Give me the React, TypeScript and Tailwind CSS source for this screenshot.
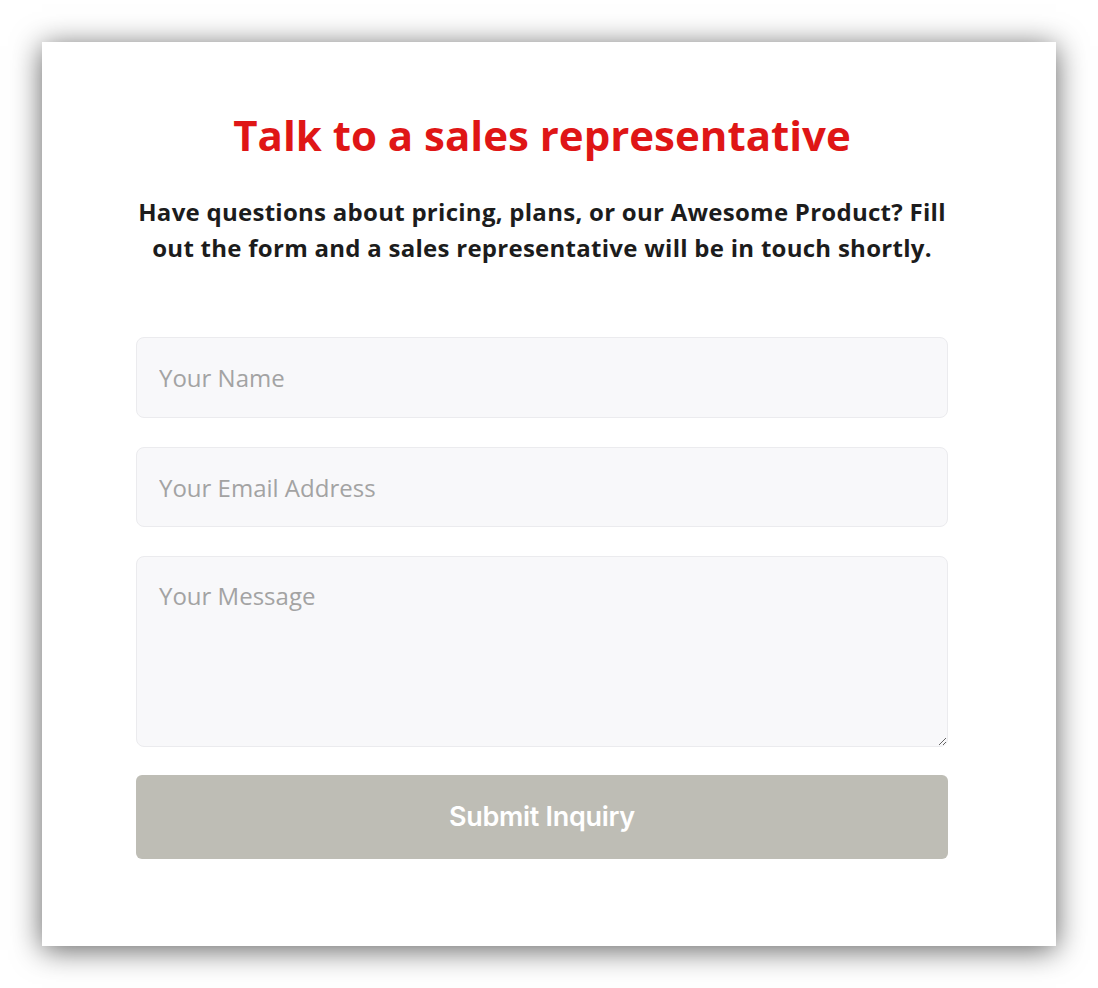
import { useState } from "react";

export default function App() {
  const [name, setName] = useState("");
  const [email, setEmail] = useState("");
  const [message, setMessage] = useState("");

  const fieldClass =
    "w-full rounded-lg border border-[#ebebee] bg-[#f8f8fa] px-[22px] text-[24px] text-[#333] placeholder:text-[#a3a3a3] outline-none";

  return (
    <div className="min-h-screen bg-white p-[42px] font-['Open_Sans',sans-serif]">
      <div className="bg-white shadow-[0_4px_28px_rgba(0,0,0,0.62)] pt-[65px] pb-[87px]">
        <div className="ml-[94px] w-[812px]">
          <h1 className="text-center text-[42px] leading-[56px] font-bold text-[#df1616]">
            Talk to a sales representative
          </h1>
          <p className="mt-[31px] text-center text-[24px] leading-[36px] font-bold tracking-[0.27px] text-[#1c1c1c]">
            Have questions about pricing, plans, or our Awesome Product? Fill out the form and a sales
            representative will be in touch shortly.
          </p>
          <form
            className="mt-[71px] flex flex-col gap-[29px]"
            onSubmit={(e) => e.preventDefault()}
          >
            <input
              type="text"
              value={name}
              onChange={(e) => setName(e.target.value)}
              placeholder="Your Name"
              className={`${fieldClass} h-[81px]`}
            />
            <input
              type="email"
              value={email}
              onChange={(e) => setEmail(e.target.value)}
              placeholder="Your Email Address"
              className={`${fieldClass} h-[80px]`}
            />
            <textarea
              value={message}
              onChange={(e) => setMessage(e.target.value)}
              placeholder="Your Message"
              className={`${fieldClass} h-[191px] py-[22px] leading-[34px]`}
            />
            <button
              type="submit"
              className="-mt-[1px] h-[84px] w-full rounded-md bg-[#bebdb5] font-['Inter',sans-serif] text-[27px] font-semibold tracking-[-0.3px] text-white"
            >
              Submit Inquiry
            </button>
          </form>
        </div>
      </div>
    </div>
  );
}
